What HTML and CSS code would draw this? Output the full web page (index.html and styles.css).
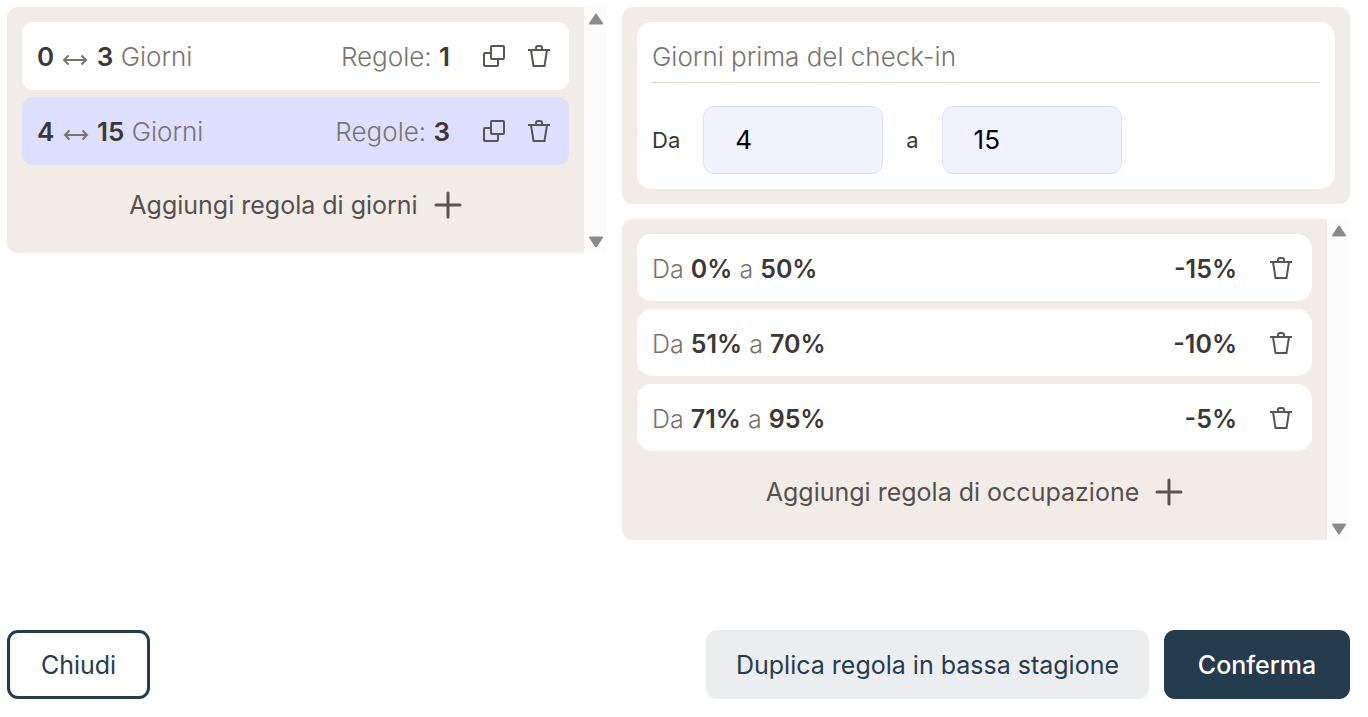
FILE: index.html
```
<!DOCTYPE html>
<html lang="it">
<head>
    <meta charset="UTF-8">
    <meta name="viewport" content="width=device-width, initial-scale=1.0">
    <title>Regole di occupazione</title>
    <link rel="stylesheet" href="styles.css">
</head>
<body>
    <!-- Shared icons -->
    <svg class="sprite" aria-hidden="true">
        <symbol id="icon-copy" viewBox="0 0 24 24">
            <path d="M9 9H3Q2 9 2 10V21Q2 22 3 22H15Q16 22 16 21V15" />
            <rect x="9" y="2" width="13" height="13" rx="1" />
        </symbol>
        <symbol id="icon-trash" viewBox="0 0 24 24">
            <path d="M1 6H23M4 6L6.500 22H17.500L20 6M9 6V4Q9 2 11 2H13Q15 2 15 4V6" />
        </symbol>
        <symbol id="icon-plus" viewBox="0 0 28 28">
            <path d="M14 2V26M2 14H26" />
        </symbol>
        <symbol id="icon-range" viewBox="0 0 24 12">
            <path d="M1 6H23M5.500 1.500L1 6L5.500 10.500M18.500 1.500L23 6L18.500 10.500" />
        </symbol>
        <symbol id="icon-arrow" viewBox="0 0 16 12">
            <path d="M8 1.500L14 10.500H2Z" />
        </symbol>
    </svg>

    <div class="page">
        <main class="columns">
            <section class="scroll-box">
                <div class="panel">
                    <div class="rule">
                        <span class="range"><b>0</b> <svg class="range-icon"><use href="#icon-range" /></svg> <b>3</b> Giorni</span>
                        <span class="count">Regole: <b>1</b></span>
                        <button class="icon-btn" aria-label="Duplica"><svg><use href="#icon-copy" /></svg></button>
                        <button class="icon-btn" aria-label="Elimina"><svg><use href="#icon-trash" /></svg></button>
                    </div>
                    <div class="rule selected">
                        <span class="range"><b>4</b> <svg class="range-icon"><use href="#icon-range" /></svg> <b>15</b> Giorni</span>
                        <span class="count">Regole: <b>3</b></span>
                        <button class="icon-btn" aria-label="Duplica"><svg><use href="#icon-copy" /></svg></button>
                        <button class="icon-btn" aria-label="Elimina"><svg><use href="#icon-trash" /></svg></button>
                    </div>
                    <button class="add-btn">Aggiungi regola di giorni <svg><use href="#icon-plus" /></svg></button>
                </div>
                <div class="scrollbar" aria-hidden="true">
                    <svg><use href="#icon-arrow" /></svg>
                    <svg class="down"><use href="#icon-arrow" /></svg>
                </div>
            </section>

            <div class="details">
                <section class="panel days">
                    <div class="days-card">
                        <h2>Giorni prima del check-in</h2>
                        <div class="fields">
                            <label for="from">Da</label>
                            <input id="from" type="text" inputmode="numeric" value="4">
                            <label for="to">a</label>
                            <input id="to" type="text" inputmode="numeric" value="15">
                        </div>
                    </div>
                </section>

                <section class="scroll-box">
                    <div class="panel occupancy">
                        <div class="rule">
                            <span class="range">Da <b>0%</b> a <b>50%</b></span>
                            <span class="count"><b>-15%</b></span>
                            <button class="icon-btn" aria-label="Elimina"><svg><use href="#icon-trash" /></svg></button>
                        </div>
                        <div class="rule">
                            <span class="range">Da <b>51%</b> a <b>70%</b></span>
                            <span class="count"><b>-10%</b></span>
                            <button class="icon-btn" aria-label="Elimina"><svg><use href="#icon-trash" /></svg></button>
                        </div>
                        <div class="rule">
                            <span class="range">Da <b>71%</b> a <b>95%</b></span>
                            <span class="count"><b>-5%</b></span>
                            <button class="icon-btn" aria-label="Elimina"><svg><use href="#icon-trash" /></svg></button>
                        </div>
                        <button class="add-btn">Aggiungi regola di occupazione <svg><use href="#icon-plus" /></svg></button>
                    </div>
                    <div class="scrollbar" aria-hidden="true">
                        <svg><use href="#icon-arrow" /></svg>
                        <svg class="down"><use href="#icon-arrow" /></svg>
                    </div>
                </section>
            </div>
        </main>

        <footer class="actions">
            <button class="btn btn-outline">Chiudi</button>
            <button class="btn btn-soft">Duplica regola in bassa stagione</button>
            <button class="btn btn-primary">Conferma</button>
        </footer>
    </div>
</body>
</html>
```
FILE: styles.css
```
* {
    box-sizing: border-box;
}
body {
    margin: 0;
    background: #fff;
    color: #797370;
    font-family: Inter, "Liberation Sans", sans-serif;
    font-size: 26px;
    font-weight: 300;
    line-height: 32px;
}
button,
input {
    font: inherit;
}
button {
    border: 0;
    padding: 0;
    background: none;
    cursor: pointer;
}
b {
    color: #3b3736;
    font-weight: 600;
}
svg {
    fill: none;
    stroke: #5a5452;
    stroke-width: 2;
}
.sprite {
    display: none;
}
.page {
    display: flex;
    flex-direction: column;
    min-height: 100vh;
    padding: 7px 18px 18px 7px;
}
.columns {
    display: grid;
    grid-template-columns: minmax(0, 75fr) minmax(0, 91fr);
    gap: 15px;
    align-items: start;
}
.details {
    display: flex;
    flex-direction: column;
    gap: 15px;
}

/* Panels */
.scroll-box {
    display: flex;
}
.panel {
    flex: 1;
    display: flex;
    flex-direction: column;
    gap: 7px;
    padding: 15px;
    border-radius: 11px;
    background: #f2ece8;
}
.scroll-box .panel {
    border-radius: 11px 0 0 11px;
}
.scrollbar {
    display: flex;
    flex-direction: column;
    justify-content: space-between;
    align-items: center;
    width: 23px;
    padding: 6px 0 5px;
    background: #fcfcfc;
}
.scrollbar svg {
    width: 16px;
    height: 12px;
    fill: #8b8b8b;
    stroke: #8b8b8b;
    stroke-linejoin: round;
}
.scrollbar .down {
    transform: rotate(180deg);
}

/* Rule rows */
.rule {
    display: flex;
    align-items: center;
    height: 68px;
    padding: 0 18px 0 15px;
    border-radius: 11px;
    background: #fff;
}
.rule.selected {
    background: #dedeff;
}
.occupancy {
    gap: 8px;
}
.occupancy .rule {
    height: 67px;
    padding-right: 19px;
    border-radius: 15px;
    font-size: 25px;
}
.range,
.count {
    padding-top: 2px;
}
.range {
    flex: 1;
}
.range-icon {
    width: 26px;
    height: 12px;
    margin: 0 1px;
    stroke: #797370;
}
.icon-btn {
    width: 24px;
    height: 24px;
    margin-left: 21px;
}
.count + .icon-btn {
    margin-left: 32px;
}
.icon-btn svg {
    display: block;
    width: 24px;
    height: 24px;
}
.add-btn {
    display: flex;
    justify-content: center;
    align-items: center;
    gap: 16px;
    height: 66px;
    color: #55504d;
    font-size: 25px;
    font-weight: 400;
}
.add-btn svg {
    width: 28px;
    height: 28px;
    stroke-width: 3;
    stroke-linecap: round;
}

/* Days before check-in */
.days-card {
    padding: 15px;
    border-radius: 15px;
    background: #fff;
}
.days-card h2 {
    margin: 0 0 23px;
    padding: 4px 0 9px;
    border-bottom: 1px solid #dcd4ce;
    font-size: 26px;
    font-weight: 300;
}
.fields {
    display: flex;
    align-items: center;
    gap: 23px;
}
.fields label {
    color: #3b3736;
    font-size: 22px;
    font-weight: 400;
}
.fields input {
    width: 180px;
    height: 68px;
    padding: 0 31px 2px;
    border: 1px solid #dedeff;
    border-radius: 11px;
    background: #f1f1ff;
    color: #000;
    font-weight: 400;
}

/* Footer */
.actions {
    display: flex;
    gap: 15px;
    margin-top: auto;
}
.btn {
    height: 69px;
    padding: 0 30px;
    border-radius: 11px;
    color: #253c4e;
    font-size: 25px;
    font-weight: 400;
}
.btn-outline {
    min-width: 143px;
    margin-right: auto;
    border: 3px solid #253c4e;
}
.btn-soft {
    background: #ecedef;
}
.btn-primary {
    min-width: 186px;
    background: #253c4e;
    color: #fff;
    font-weight: 500;
}
```
